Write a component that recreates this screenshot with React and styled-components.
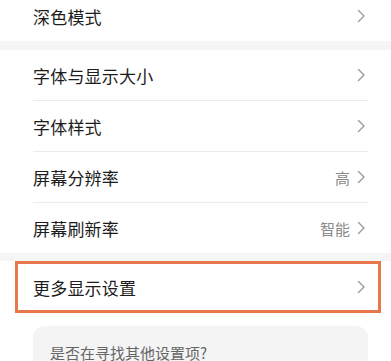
import React from "react";
import styled, { createGlobalStyle } from "styled-components";

const GlobalStyle = createGlobalStyle`
  html, body {
    margin: 0;
    padding: 0;
    background: #ffffff;
    overflow: hidden;
  }
  body {
    font-family: "Noto Sans CJK SC", "Noto Sans", sans-serif;
  }
`;

const Page = styled.div`
  width: 391px;
  height: 361px;
  overflow: hidden;
  background: #ffffff;
`;

const Scroller = styled.div`
  margin-top: -9px;
`;

const Group = styled.div`
  background: #ffffff;
`;

const Band = styled.div`
  height: ${({ h }) => h}px;
  background: #f5f5f5;
`;

const Row = styled.div`
  height: ${({ h }) => h || 50}px;
  display: flex;
  align-items: center;
  padding: 0 25px 0 33px;
  box-sizing: border-box;
`;

const Divider = styled.div`
  height: 1px;
  margin: 0 23px 0 33px;
  background: #ebebeb;
`;

const Label = styled.span`
  flex: 1;
  font-size: 17px;
  color: #1c1c1c;
  letter-spacing: 0.2px;
`;

const Value = styled.span`
  font-size: 15px;
  color: #8a8a8a;
  margin-right: 7px;
`;

const HighlightWrap = styled.div`
  padding: 0 10px 0 15px;
`;

const Highlight = styled.div`
  height: 52px;
  border: 3px solid #e8784c;
  box-sizing: border-box;
  display: flex;
  align-items: center;
  padding: 0 12px 0 15px;
`;

const Card = styled.div`
  margin: 13px 23px 0 33px;
  background: #f4f4f4;
  border-radius: 12px;
  padding: 16px 17px 20px;
`;

const CardText = styled.div`
  font-size: 15px;
  color: #666666;
`;

const Chevron = () => (
  <svg width="9" height="14" viewBox="0 0 9 14" fill="none">
    <path
      d="M1.5 1.5L7 7L1.5 12.5"
      stroke="#9a9a9a"
      strokeWidth="1.4"
      strokeLinecap="round"
      strokeLinejoin="round"
    />
  </svg>
);

const items = [
  { label: "字体与显示大小" },
  { label: "字体样式" },
  { label: "屏幕分辨率", value: "高" },
  { label: "屏幕刷新率", value: "智能" },
];

export default function App() {
  return (
    <Page>
      <GlobalStyle />
      <Scroller>
        <Group>
          <Row>
            <Label>深色模式</Label>
            <Chevron />
          </Row>
        </Group>
        <Band h={9} />
        <Group>
          {items.map((item, i) => (
            <React.Fragment key={item.label}>
              {i > 0 && <Divider />}
              <Row>
                <Label>{item.label}</Label>
                {item.value && <Value>{item.value}</Value>}
                <Chevron />
              </Row>
            </React.Fragment>
          ))}
        </Group>
        <Band h={8} />
        <HighlightWrap>
          <Highlight>
            <Label>更多显示设置</Label>
            <Chevron />
          </Highlight>
        </HighlightWrap>
        <Card>
          <CardText>是否在寻找其他设置项?</CardText>
        </Card>
      </Scroller>
    </Page>
  );
}
